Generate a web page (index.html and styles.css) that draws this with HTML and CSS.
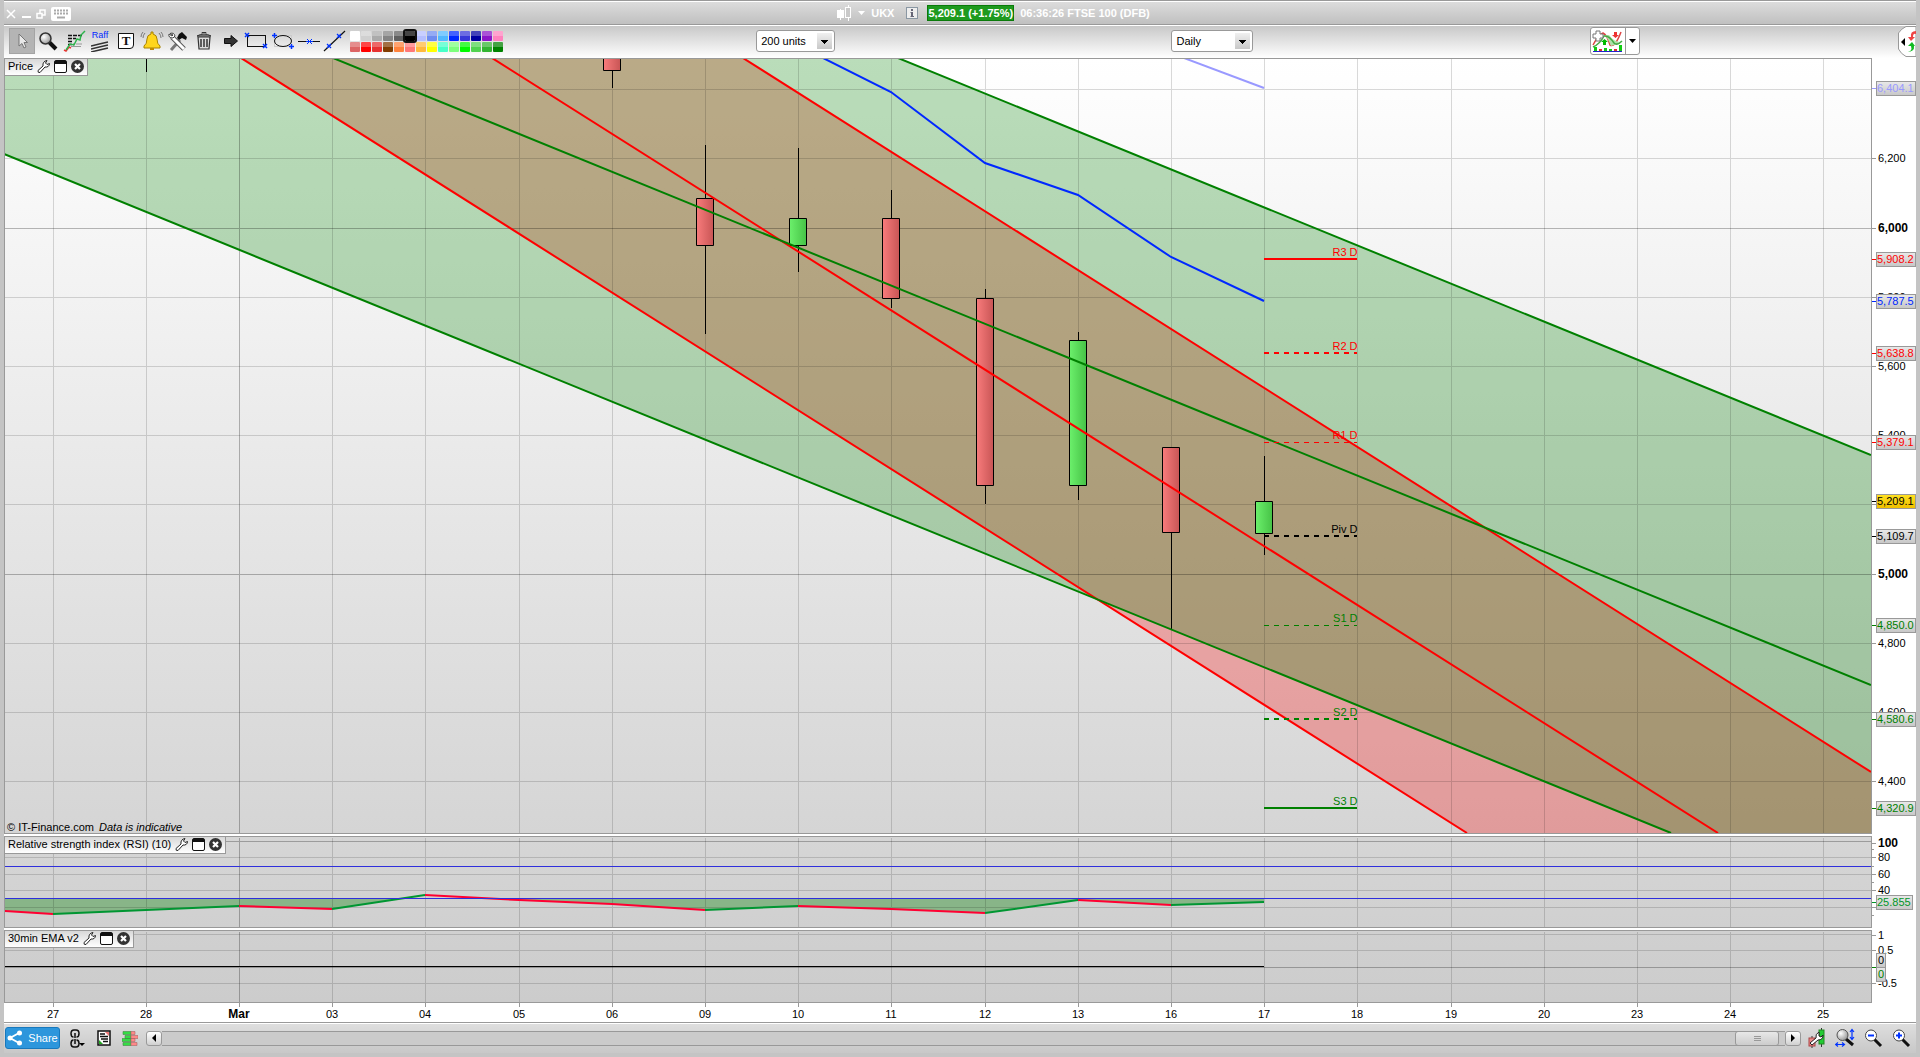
FILE: index.html
```html
<!DOCTYPE html>
<html lang="en">
<head>
<meta charset="utf-8">
<meta name="viewport" content="width=device-width, initial-scale=1">
<title>UKX - FTSE 100 (DFB)</title>
<link rel="stylesheet" href="styles.css">
</head>
<body>
<svg class="defs" aria-hidden="true">
  <defs>
    <linearGradient id="up"><stop offset="0" stop-color="#6cf06c"/><stop offset="1" stop-color="#46c246"/></linearGradient>
    <linearGradient id="down"><stop offset="0" stop-color="#f87c7c"/><stop offset="1" stop-color="#c85555"/></linearGradient>
    <radialGradient id="lens" cx=".35" cy=".35" r=".8"><stop offset="0" stop-color="#fff"/><stop offset="1" stop-color="#888"/></radialGradient>
    <symbol id="wrench" viewBox="0 0 13 13"><path d="M1 10.500 6 6C5.500 3 7 1 10 .500L8.500 3 10 4.500 12.500 3.500C12.500 6 10.500 7.500 8 7L3 12.500Q.5 13 1 10.500Z" fill="#fff" stroke="#222" stroke-width="1"/></symbol>
    <symbol id="panel" viewBox="0 0 13 13"><rect x=".5" y=".5" width="12" height="12" rx="1.500" fill="#fff" stroke="#111"/><path d="M1 1H12V4H1Z" fill="#111"/></symbol>
    <symbol id="close" viewBox="0 0 13 13"><circle cx="6.500" cy="6.500" r="6.500" fill="#333"/><path d="M4 4 9 9M9 4 4 9" stroke="#fff" stroke-width="2.200"/></symbol>
  </defs>
</svg>

<header class="titlebar">
  <div class="window-buttons">
    <button type="button" aria-label="Close"><svg width="10" height="10"><path d="M1 1 9 9M9 1 1 9" stroke="#fff" stroke-width="1.500"/></svg></button>
    <button type="button" aria-label="Minimise"><svg width="10" height="10"><path d="M1 8H10" stroke="#fff" stroke-width="2"/></svg></button>
    <button type="button" aria-label="Restore"><svg width="10" height="10"><path d="M4 4V1H9V6H6M1 4.500H6V9H1Z" fill="none" stroke="#fff" stroke-width="1.500"/></svg></button>
    <button type="button" aria-label="Keyboard"><svg width="20" height="14"><rect width="20" height="14" rx="2" fill="#fff"/><path d="M3 3.500H17M3 6.500H17" stroke="#aaa" stroke-width="2" stroke-dasharray="2 1"/><path d="M6 10.500H14" stroke="#aaa" stroke-width="2"/></svg></button>
  </div>
  <div class="instrument">
    <svg width="15" height="16"><path d="M3.500 4V15M11.500 0V16" stroke="#fff"/><rect y="5" width="7" height="8" fill="#fff"/><rect x="8.500" y="2.500" width="5" height="10" fill="#c9c9c9" stroke="#fff"/></svg>
    <svg class="caret" width="7" height="4"><path d="M0 0H7L3.500 4Z" fill="#fff"/></svg>
    <span>UKX</span>
    <svg class="info" width="12" height="12"><rect x=".5" y=".5" width="11" height="11" fill="#eee" stroke="#8a97a3"/><path d="M5 2H7V4H5ZM4.500 5H7V9H8V10H4.500V9H5V6H4.500Z" fill="#667"/></svg>
    <span class="quote">5,209.1 (+1.75%)</span>
    <span>06:36:26 FTSE 100 (DFB)</span>
  </div>
</header>

<div class="toolbar">
  <div class="tools">
    <button type="button" class="tool tool--active" aria-label="Pointer"><svg viewBox="0 0 26 26"><path d="M10 6V18L13 15.500 15 20 17 19 15 14.500H18.500Z" fill="#e8e8e8" stroke="#777"/></svg></button>
    <button type="button" class="tool" aria-label="Zoom"><svg viewBox="0 0 26 26"><path d="M14 14 21 21" stroke="#111" stroke-width="4"/><circle cx="10.500" cy="10.500" r="5.500" fill="url(#lens)" stroke="#333" stroke-width="1.500"/></svg></button>
    <button type="button" class="tool" aria-label="Analysis"><svg viewBox="0 0 26 26"><path d="M7 7.500H21M7 10.500H15M7 13.500H12M7 16.500H13" stroke="#111" stroke-width="1.500" stroke-dasharray="4 1"/><path d="M15 16H21M10 18.500H20" stroke="#999"/><path d="M3 22 5 23 8 19 10 20" fill="none" stroke="#e33" stroke-width="1.500"/><path d="M5 22 9 16 13 17 16 11 19 12 20 7 24 3" fill="none" stroke="#2cb44c" stroke-width="1.500"/></svg></button>
    <button type="button" class="tool tool--raff" aria-label="Raff channel"><span>Raff</span><svg viewBox="0 0 18 11"><path d="M0 5Q8 3 17 1M0 8Q8 6 17 4M0 11Q8 9 17 7" fill="none" stroke="#333" stroke-width="1.400"/></svg></button>
    <button type="button" class="tool tool--text" aria-label="Text"><span>T</span></button>
    <button type="button" class="tool" aria-label="Alert"><svg viewBox="0 0 26 26"><path d="M5 18Q8 16 8 11Q8 7 12 6V4H14V6Q18 7 18 11Q18 16 21 18V20H5Z" fill="#ffd51c" stroke="#a88200"/><path d="M11 20H15V22H11Z" fill="#c48b00"/><path d="M6 5Q4 7 4 10M4 4Q2 6 2 9M20 5Q22 7 22 10M22 4Q24 6 24 9" fill="none" stroke="#777"/></svg></button>
    <button type="button" class="tool" aria-label="Settings"><svg viewBox="0 0 26 26"><path d="M6 22 15 12" stroke="#777" stroke-width="3"/><path d="M7 9 19 21" stroke="#555" stroke-width="5"/><path d="M7 9 19 21" stroke="#fff" stroke-width="3"/><path d="M5 5.500Q9 4 10 8L8 10Q3 10 4 6L7 8 8 7Z" fill="#fff" stroke="#444"/><path d="M14 6 17 4 22 9 21 12 17 10 14 12 12 10Z" fill="#111"/></svg></button>
    <button type="button" class="tool" aria-label="Delete"><svg viewBox="0 0 26 26"><path d="M7 9H19L18 21H8Z" fill="#ddd" stroke="#333" stroke-width="1.200"/><path d="M10 11V19M13 11V19M16 11V19" stroke="#333" stroke-width="1.500"/><path d="M6 8Q13 4 20 8Z" fill="#aaa" stroke="#333"/><path d="M11 5.500V4.500H15V5.500" fill="none" stroke="#333"/></svg></button>
    <button type="button" class="tool" aria-label="Arrow"><svg viewBox="0 0 26 26"><path d="M7.500 10.500H14V7.500L20.500 13 14 18.500V15.500H7.500Z" fill="#333" stroke="#111"/></svg></button>
    <button type="button" class="tool" aria-label="Rectangle"><svg viewBox="0 0 26 26"><rect x="4.500" y="7.500" width="18" height="11" fill="none" stroke="#111"/><path d="M2 5 6 9M6 5 2 9M20 16 24 20M24 16 20 20" stroke="#03f" stroke-width="1.500"/></svg></button>
    <button type="button" class="tool" aria-label="Ellipse"><svg viewBox="0 0 26 26"><rect x="5.500" y="7.500" width="17" height="11" fill="none" stroke="#ccc"/><ellipse cx="14" cy="13" rx="8.500" ry="5.500" fill="none" stroke="#111"/><path d="M3 7.500H8M5.500 5V10M20 18.500H25M22.500 16V21" stroke="#03f" stroke-width="1.500"/></svg></button>
    <button type="button" class="tool" aria-label="Horizontal line"><svg viewBox="0 0 26 26"><path d="M3 13.500H25" stroke="#111"/><path d="M12 11 17 16M17 11 12 16M11 13.500H18" stroke="#03f"/></svg></button>
    <button type="button" class="tool" aria-label="Line"><svg viewBox="0 0 26 26"><path d="M3 23 24 3" stroke="#111" stroke-width="1.200"/><path d="M6 16 10 20M10 16 6 20M16 6 20 10M20 6 16 10" stroke="#03f" stroke-width="1.300"/></svg></button>
  </div>
  <div class="palette">
    <button type="button" aria-label="White" style="--c:#fff"></button><button type="button" aria-label="Grey 1" style="--c:#d0d0d0"></button><button type="button" aria-label="Grey 2" style="--c:#aaa"></button><button type="button" aria-label="Grey 3" style="--c:#848484"></button><button type="button" aria-label="Grey 4" style="--c:#606060"></button><button type="button" aria-label="Black" class="is-selected" style="--c:#000"></button><button type="button" aria-label="Lavender" style="--c:#b4beff"></button><button type="button" aria-label="Cornflower" style="--c:#6e8cf0"></button><button type="button" aria-label="Sky" style="--c:#50b8ff"></button><button type="button" aria-label="Blue" style="--c:#0028ff"></button><button type="button" aria-label="Royal blue" style="--c:#3838d8"></button><button type="button" aria-label="Navy" style="--c:#0000a0"></button><button type="button" aria-label="Purple" style="--c:#8c14c8"></button><button type="button" aria-label="Pink" style="--c:#ff82be"></button>
    <button type="button" aria-label="Rose" style="--c:#dc6464"></button><button type="button" aria-label="Red" style="--c:#f00"></button><button type="button" aria-label="Crimson" style="--c:#e63232"></button><button type="button" aria-label="Brown" style="--c:#823c00"></button><button type="button" aria-label="Orange" style="--c:#ff823c"></button><button type="button" aria-label="Salmon" style="--c:#ff7878"></button><button type="button" aria-label="Amber" style="--c:#ffb93c"></button><button type="button" aria-label="Yellow" style="--c:#ff0"></button><button type="button" aria-label="Aqua" style="--c:#46ffc8"></button><button type="button" aria-label="Mint" style="--c:#7dff7d"></button><button type="button" aria-label="Lime" style="--c:#00fa00"></button><button type="button" aria-label="Green 1" style="--c:#50d250"></button><button type="button" aria-label="Green 2" style="--c:#32b432"></button><button type="button" aria-label="Green 3" style="--c:#008200"></button>
  </div>
  <select class="combo combo--units" aria-label="Number of units"><option>200 units</option></select>
  <select class="combo combo--period" aria-label="Timeframe"><option>Daily</option></select>
  <div class="indicators">
    <button type="button" aria-label="Add indicator"><svg width="32" height="22"><path d="M1 15Q7 4 11 3Q15 5 18 15Q23 18 29 2" fill="none" stroke="#d44" stroke-width="1.500"/><path d="M12 5Q16 8 19 16Q23 15 28 12Q22 12 17 5Z" fill="#aee0a8"/><path d="M1 17Q8 14 12 6Q17 5 22 13Q25 16 30 11" fill="none" stroke="#4a4" stroke-width="1.500"/><path d="M4 1H8V4H11V8H8V11H4V8H1V4H4Z" fill="#fff" stroke="#777"/><path d="M22 2H25V5H27L23.500 8 20 5H22Z" fill="#e33"/><path d="M11 15V12H9L12.500 9 16 12H14V15Z" fill="#0b0"/><path d="M2 21V17H5V21M12 21V18H15V21M17 21V19H20V21M27 21V15H30V21" fill="#1c1"/><path d="M7 21V19H10V21M22 21V19H25V21" fill="#d33"/><path d="M1 21.500H30" stroke="#22c"/></svg></button>
    <button type="button" class="drop" aria-label="Indicator list"><svg width="7" height="4"><path d="M0 0H7L3.500 4Z"/></svg></button>
  </div>
  <button type="button" class="flyout" aria-label="Trading panel"><svg width="18" height="31" viewBox="0 0 18 31"><path d="M18 .5H8Q3 3 .5 7V23Q3 28 8 30.500H18Z" fill="#fff" stroke="#999"/><path d="M7 12V20L3 16Z"/><path d="M18 5Q12 5 13 11H10L13 15 17 11H15Q15 7 18 8Z" fill="#e44"/><path d="M8 26Q15 26 13 20H10L14 16 17 20H16Q17 26 8 26Z" fill="#1b2"/></svg></button>
</div>

<main class="charts">
  <section class="row row--price">
    <div class="plot">
      <svg class="canvas" viewBox="5 59 1866 774" preserveAspectRatio="none">
        <g class="bands">
          <path class="band-red" d="M241 58H743L1871 772V833H1467Z"/>
          <path class="band-green" d="M4 58H898L1871 455V833H1671L4 154Z"/>
        </g>
        <g class="grid" transform="translate(.5 .5)">
          <path d="M53 58V833M146 58V833M332 58V833M425 58V833M519 58V833M612 58V833M705 58V833M798 58V833M891 58V833M985 58V833M1078 58V833M1171 58V833M1264 58V833M1357 58V833M1451 58V833M1544 58V833M1637 58V833M1730 58V833M1823 58V833M4 89H1871M4 158H1871M4 297H1871M4 366H1871M4 435H1871M4 504H1871M4 643H1871M4 712H1871M4 781H1871"/>
          <path class="major" d="M239 58V833M4 228H1871M4 574H1871"/>
        </g>
        <g class="candles">
          <path class="wick" d="M146.500 59V72M612.500 70V88M705.500 145V334M798.500 148V272M891.500 190V308M985.500 289V504M1078.500 332V500M1171.500 447V629M1264.500 456V555"/>
          <g fill="url(#down)">
            <rect x="603.500" y="50.500" width="17" height="20"/>
            <rect x="696.500" y="198.500" width="17" height="47"/>
            <rect x="882.500" y="218.500" width="17" height="80"/>
            <rect x="976.500" y="298.500" width="17" height="187"/>
            <rect x="1162.500" y="447.500" width="17" height="85"/>
          </g>
          <g fill="url(#up)">
            <rect x="789.500" y="218.500" width="17" height="27"/>
            <rect x="1069.500" y="340.500" width="17" height="145"/>
            <rect x="1255.500" y="501.500" width="17" height="32"/>
          </g>
        </g>
        <g class="trends">
          <path class="red" d="M241 58 1467 833M492 58 1718 833M743 58 1871 772"/>
          <path class="green" d="M4 154 1671 833M333 58 1871 685M898 58 1871 455"/>
          <path class="blue" d="M823 58 891 92 985 163 1078 195 1171 257 1264 301"/>
          <path class="violet" d="M1184 58 1264 88"/>
        </g>
        <g class="pivots">
          <path class="red thick" d="M1264 259H1357"/>
          <path class="red thick dash" d="M1264 353H1357"/>
          <path class="red dash" d="M1264 442.500H1357"/>
          <path class="black thick dash" d="M1264 536H1357"/>
          <path class="green dash" d="M1264 625.500H1357"/>
          <path class="green thick dash" d="M1264 719H1357"/>
          <path class="green thick" d="M1264 808H1357"/>
        </g>
      </svg>
      <span class="pivot red" style="--x:1357;--y:251">R3 D</span>
      <span class="pivot red" style="--x:1357;--y:346">R2 D</span>
      <span class="pivot red" style="--x:1357;--y:435">R1 D</span>
      <span class="pivot" style="--x:1357;--y:529">Piv D</span>
      <span class="pivot green" style="--x:1357;--y:618">S1 D</span>
      <span class="pivot green" style="--x:1357;--y:713">S2 D</span>
      <span class="pivot green" style="--x:1357;--y:802">S3 D</span>
      <div class="tab"><span>Price</span><button type="button" aria-label="Price settings"><svg><use href="#wrench"/></svg></button><button type="button" aria-label="Price window"><svg><use href="#panel"/></svg></button><button type="button" aria-label="Close Price"><svg><use href="#close"/></svg></button></div>
      <p class="credit">© IT-Finance.com <i>Data is indicative</i></p>
    </div>
    <div class="axis">
      <span class="tick" style="--y:158">6,200</span>
      <span class="tick major" style="--y:228">6,000</span>
      <span class="tick" style="--y:297">5,800</span>
      <span class="tick" style="--y:366">5,600</span>
      <span class="tick" style="--y:435">5,400</span>
      <span class="tick" style="--y:504"></span>
      <span class="tick major" style="--y:574">5,000</span>
      <span class="tick" style="--y:643">4,800</span>
      <span class="tick" style="--y:712">4,600</span>
      <span class="tick" style="--y:781">4,400</span>
      <span class="tag violet" style="--y:88">6,404.1</span>
      <span class="tag red" style="--y:259">5,908.2</span>
      <span class="tag blue" style="--y:301">5,787.5</span>
      <span class="tag red" style="--y:353">5,638.8</span>
      <span class="tag red" style="--y:442">5,379.1</span>
      <span class="tag last" style="--y:501">5,209.1</span>
      <span class="tag" style="--y:536">5,109.7</span>
      <span class="tag green" style="--y:625">4,850.0</span>
      <span class="tag green" style="--y:719">4,580.6</span>
      <span class="tag green" style="--y:808">4,320.9</span>
    </div>
  </section>

  <section class="row row--rsi">
    <div class="plot">
      <svg class="canvas" viewBox="5 837 1866 90" preserveAspectRatio="none">
        <path class="rsi-zone" d="M4 898V911L53 914 146 910 239 906 332 909 402 898ZM480 898 519 900 612 904 705 910 798 906 891 909 985 913 1078 900 1171 905 1264 902V898Z"/>
        <g class="grid" transform="translate(.5 .5)">
          <path d="M53 837V927M146 837V927M332 837V927M425 837V927M519 837V927M612 837V927M705 837V927M798 837V927M891 837V927M985 837V927M1078 837V927M1171 837V927M1264 837V927M1357 837V927M1451 837V927M1544 837V927M1637 837V927M1730 837V927M1823 837V927M4 857H1871M4 874H1871M4 890H1871M4 907H1871"/>
          <path class="major" d="M239 837V927M4 841H1871"/>
        </g>
        <path class="rsi-down" d="M4 911 53 914M239 906 332 909M425 895 519 900 612 904 705 910M798 906 891 909 985 913M1078 900 1171 905"/>
        <path class="rsi-up" d="M53 914 146 910 239 906M332 909 425 895M705 910 798 906M985 913 1078 900M1171 905 1264 902"/>
        <path class="level" d="M4 866.500H1871M4 898.500H1871"/>
      </svg>
      <div class="tab"><span>Relative strength index (RSI) (10)</span><button type="button" aria-label="RSI settings"><svg><use href="#wrench"/></svg></button><button type="button" aria-label="RSI window"><svg><use href="#panel"/></svg></button><button type="button" aria-label="Close RSI"><svg><use href="#close"/></svg></button></div>
    </div>
    <div class="axis">
      <span class="tick major" style="--y:843">100</span>
      <span class="tick minor" style="--y:849"></span>
      <span class="tick" style="--y:857">80</span>
      <span class="tick minor" style="--y:866"></span>
      <span class="tick" style="--y:874">60</span>
      <span class="tick minor" style="--y:882"></span>
      <span class="tick" style="--y:890">40</span>
      <span class="tick" style="--y:907"></span>
      <span class="tick minor" style="--y:915"></span>
      <span class="tag up" style="--y:902">25.855</span>
    </div>
  </section>

  <section class="row row--ema">
    <div class="plot">
      <svg class="canvas" viewBox="5 931 1866 71" preserveAspectRatio="none">
        <g class="grid" transform="translate(.5 .5)">
          <path d="M53 931V1002M146 931V1002M332 931V1002M425 931V1002M519 931V1002M612 931V1002M705 931V1002M798 931V1002M891 931V1002M985 931V1002M1078 931V1002M1171 931V1002M1264 931V1002M1357 931V1002M1451 931V1002M1544 931V1002M1637 931V1002M1730 931V1002M1823 931V1002M4 934H1871M4 950H1871M4 983H1871"/>
          <path class="major" d="M239 931V1002M4 967H1871"/>
        </g>
        <path class="ema" d="M4 966.500H1264"/>
      </svg>
      <div class="tab"><span>30min EMA v2</span><button type="button" aria-label="EMA settings"><svg><use href="#wrench"/></svg></button><button type="button" aria-label="EMA window"><svg><use href="#panel"/></svg></button><button type="button" aria-label="Close EMA"><svg><use href="#close"/></svg></button></div>
    </div>
    <div class="axis">
      <span class="tick" style="--y:935">1</span>
      <span class="tick" style="--y:950">0.5</span>
      <span class="tick" style="--y:983">-0.5</span>
      <span class="tick zero" style="--y:967"></span>
      <span class="tag bare" style="--y:960">0</span>
      <span class="tag bare green" style="--y:974">0</span>
    </div>
  </section>

  <div class="dates">
    <div class="dates-scale">
      <span style="--x:53">27</span><span style="--x:146">28</span><span class="major" style="--x:239">Mar</span><span style="--x:332">03</span><span style="--x:425">04</span><span style="--x:519">05</span><span style="--x:612">06</span><span style="--x:705">09</span><span style="--x:798">10</span><span style="--x:891">11</span><span style="--x:985">12</span><span style="--x:1078">13</span><span style="--x:1171">16</span><span style="--x:1264">17</span><span style="--x:1357">18</span><span style="--x:1451">19</span><span style="--x:1544">20</span><span style="--x:1637">23</span><span style="--x:1730">24</span><span style="--x:1823">25</span>
    </div>
  </div>
</main>

<footer class="bottombar">
  <button type="button" class="share"><svg width="16" height="16"><path d="M3 8 12 3M3 8 12 13" stroke="#fff" stroke-width="2"/><circle cx="3" cy="8" r="2.500" fill="#fff"/><circle cx="12.500" cy="3" r="2.500" fill="#fff"/><circle cx="12.500" cy="13" r="2.500" fill="#fff"/></svg>Share</button>
  <div class="links">
    <button type="button" aria-label="Link windows"><svg width="16" height="19"><path d="M3.500 8Q1 8 1 4.500T4 1H6Q9 1 9 4.500T6.500 8M5 4V9M3.500 11Q1 11 1 14.500T4 18H6Q9 18 9 14.500T6.500 11M5 10V15" fill="none" stroke="#111" stroke-width="1.500"/><path d="M9 14H15L12 17Z"/></svg></button>
    <button type="button" aria-label="Report"><svg width="14" height="16"><rect x="1" y="1" width="12" height="14" fill="#fff" stroke="#111" stroke-width="1.500"/><path d="M3 4H8M3 6.500H11M4 9H11M6 11.500H11" stroke="#111" stroke-width="1.500"/><path d="M8 2H12V6Z" fill="#e77"/><path d="M2 10V14H6Z" fill="#2a2"/></svg></button>
    <button type="button" aria-label="Market depth"><svg width="16" height="16"><path d="M1 1.500H9V4.500H1ZM3 5.500H9V8.500H3ZM0 8.500H9V11.500H0ZM1 12.500H9V15.500H1Z" fill="#3d4" stroke="#484" stroke-width=".6"/><path d="M9 1.500H13V4.500H9ZM9 5.500H16V8.500H9ZM9 8.500H13V11.500H9ZM9 12.500H15V15.500H9Z" fill="#f88" stroke="#a66" stroke-width=".6"/></svg></button>
  </div>
  <div class="scrollbar">
    <button type="button" aria-label="Scroll left"><svg width="4" height="8"><path d="M4 0V8L0 4Z"/></svg></button>
    <div class="track"><div class="thumb"></div></div>
    <button type="button" aria-label="Scroll right"><svg width="4" height="8"><path d="M0 0V8L4 4Z"/></svg></button>
  </div>
  <div class="zoom">
    <button type="button" aria-label="Chart settings"><svg width="20" height="20"><path d="M5 8V20M14.500 0V19" stroke="#333"/><rect x="2" y="10" width="6" height="8" fill="#e88" stroke="#a44"/><rect x="12" y="2" width="5" height="14" fill="#2c3" stroke="#282"/><path d="M3 15 9 10Q8 6 12 4V8L14 9 16 7Q16 12 11 12L5 17Z" fill="#fff" stroke="#222"/></svg></button>
    <button type="button" aria-label="Fit"><svg width="20" height="20"><path d="M11 11 18 17" stroke="#111" stroke-width="3"/><circle cx="7.500" cy="7" r="5.500" fill="url(#lens)" stroke="#555"/><path d="M17 2V11M15 4 17 1.500 19 4M15 9 17 11.500 19 9M1 16.500H9M3 14.500 .5 16.500 3 18.500M7 14.500 9.500 16.500 7 18.500" fill="none" stroke="#03f" stroke-width="1.200"/></svg></button>
    <button type="button" aria-label="Zoom out"><svg width="20" height="20"><path d="M11 11 18 18" stroke="#111" stroke-width="3"/><circle cx="8" cy="7.500" r="5.500" fill="#fff" stroke="#444"/><path d="M5 7.500H11" stroke="#03f" stroke-width="2"/></svg></button>
    <button type="button" aria-label="Zoom in"><svg width="20" height="20"><path d="M11 11 18 18" stroke="#111" stroke-width="3"/><circle cx="8" cy="7.500" r="5.500" fill="#fff" stroke="#444"/><path d="M5 7.500H11M8 4.500V10.500" stroke="#03f" stroke-width="2"/></svg></button>
  </div>
</footer>
</body>
</html>
```
FILE: styles.css
```css
* {
  box-sizing: border-box;
}

body {
  margin: 0;
  min-height: 100vh;
  display: flex;
  flex-direction: column;
  border: solid #c4c4c4;
  border-width: 0 4px 4px;
  background: #fff;
  font: 11px/14px "Liberation Sans", Arial, sans-serif;
  color: #000;
}

button {
  display: flex;
  align-items: center;
  justify-content: center;
  padding: 0;
  border: 0;
  background: none;
  color: inherit;
  font: inherit;
}

svg {
  display: block;
  flex: none;
}

.defs {
  position: absolute;
  width: 0;
  height: 0;
}

.red { color: #f00; }
.green { color: #008000; }
.blue { color: #0028ff; }
.violet { color: #9999ff; }
.up { color: #009628; }

/* Title bar */

.titlebar {
  display: flex;
  align-items: center;
  height: 25px;
  border-top: 1px solid #999;
  border-bottom: 1px solid #999;
  background: linear-gradient(#fff 1px, #dcdcdc 1px, #c0c0c0);
  color: #fff;
  font-weight: bold;
}

.window-buttons {
  display: flex;
  align-items: center;
  gap: 5px;
  padding: 2px 0 0 2px;
}

.instrument {
  flex: 1;
  display: flex;
  align-items: center;
  justify-content: center;
  gap: 6px;
}

.info {
  margin-left: 6px;
}

.quote {
  margin-left: 3px;
  border: 1px solid #0a7a0a;
  background: #1e9a1e;
}

/* Toolbar */

.toolbar {
  display: grid;
  grid-template-columns: auto auto 253fr auto 336fr auto 336fr auto 258fr auto;
  align-items: center;
  height: 33px;
  padding-bottom: 1px;
  background: linear-gradient(#fff 1px, #c8c8c8 1px, #fff);
}

.tools {
  display: flex;
  padding-left: 5px;
}

.tool {
  width: 26px;
  height: 26px;
}

.tool svg {
  width: 26px;
  height: 26px;
}

.tool--active {
  border: 1px solid #a4a4a4;
  background: #b4b4b4;
}

.tool--raff {
  flex-direction: column;
  gap: 1px;
  color: #0028ff;
  font-size: 9px;
  line-height: 9px;
}

.tool--raff svg {
  width: 18px;
  height: 11px;
}

.tool--text span {
  width: 16px;
  height: 16px;
  border: 1px solid #111;
  border-bottom-right-radius: 4px;
  background: #fff;
  color: #111;
  font: bold 13px/14px "Liberation Serif", serif;
}

.palette {
  display: grid;
  grid-template-columns: repeat(14, 10px);
  gap: 1px;
  margin-left: 3px;
}

.palette button {
  height: 10px;
  border-radius: 1px;
  background: linear-gradient(#fff4 50%, #fff0 50%) var(--c);
}

.palette .is-selected {
  z-index: 1;
  outline: 2px solid #111;
}

.combo {
  height: 22px;
  border: 1px solid #999;
  border-radius: 3px;
  padding: 0 20px 0 4px;
  appearance: none;
  background:
    linear-gradient(#000, #000) right 9px top 12px / 1px 1px no-repeat,
    linear-gradient(#000, #000) right 8px top 11px / 3px 1px no-repeat,
    linear-gradient(#000, #000) right 7px top 10px / 5px 1px no-repeat,
    linear-gradient(#000, #000) right 6px top 9px / 7px 1px no-repeat,
    linear-gradient(#f0f0f0, #c8c8c8) right 2px center / 15px 16px no-repeat,
    #fff;
  color: #000;
  font: inherit;
}

.combo--units {
  grid-column: 4;
  width: 79px;
}

.combo--period {
  grid-column: 6;
  width: 82px;
}

.indicators {
  grid-column: 8;
  display: flex;
  width: 50px;
  height: 28px;
  border: 1px solid #999;
  border-radius: 3px;
  background: #fff;
}

.indicators button {
  flex: 1;
}

.indicators .drop {
  flex: none;
  width: 14px;
  border-left: 1px solid #999;
}

.flyout {
  grid-column: 10;
}

/* Chart panels */

.charts {
  flex: 1;
  display: flex;
  flex-direction: column;
  gap: 2px;
}

.row {
  display: flex;
}

.row--price {
  --top: 58;
  --span: 776;
  --paper: linear-gradient(#fff, #d5d5d5);
  flex: 1;
  min-height: 320px;
}

.row--rsi {
  --top: 836;
  --span: 92;
  --paper: linear-gradient(#d6d6d6, #d0d0d0);
  height: 92px;
}

.row--ema {
  --top: 930;
  --span: 73;
  --paper: linear-gradient(#d0d0d0, #cccccc);
  height: 73px;
}

.plot {
  position: relative;
  flex: 1;
  border: 1px solid #999;
  background: var(--paper);
}

.canvas {
  position: absolute;
  inset: 0;
  width: 100%;
  height: 100%;
  fill: none;
}

.canvas path,
.canvas rect {
  vector-effect: non-scaling-stroke;
}

.grid {
  stroke: rgba(0, 0, 0, 0.15);
  shape-rendering: crispEdges;
}

.grid .major {
  stroke: rgba(0, 0, 0, 0.27);
}

.candles {
  stroke: #000;
}

.band-red { fill: rgba(255, 0, 0, 0.27); }
.band-green { fill: rgba(0, 128, 0, 0.27); }

.trends path {
  stroke: currentColor;
  stroke-width: 2;
}

.pivots path {
  stroke: currentColor;
}

.pivots .thick {
  stroke-width: 2;
}

.pivots .dash {
  stroke-dasharray: 5 5;
}

.level {
  stroke: #2f2fdc;
}

.rsi-zone { fill: rgba(0, 128, 0, 0.35); }

.rsi-down {
  stroke: #ff0032;
  stroke-width: 2;
}

.rsi-up {
  stroke: #009632;
  stroke-width: 2;
}

.ema {
  stroke: #000;
}

.pivot {
  position: absolute;
  top: calc(100% * (var(--y) - var(--top)) / var(--span));
  right: calc(100% * (1871 - var(--x)) / 1868);
  margin-top: -7px;
  white-space: nowrap;
}

.tab {
  position: absolute;
  top: 0;
  left: 0;
  display: flex;
  align-items: center;
  gap: 4px;
  height: 17px;
  padding: 0 3px 2px;
  border: solid #999;
  border-width: 0 1px 1px 0;
  background: linear-gradient(#d8d8d8, #fff);
}

.tab svg {
  width: 13px;
  height: 13px;
}

.credit {
  position: absolute;
  bottom: 0;
  left: 2px;
  margin: 0;
  line-height: 12px;
}

.credit i {
  margin-left: 2px;
}

/* Value axes */

.axis {
  position: relative;
  width: 44px;
}

.tick,
.tag {
  position: absolute;
  top: calc(100% * (var(--y) - var(--top)) / var(--span));
  height: 14px;
  margin-top: -7px;
}

.tick {
  left: 0;
  padding-left: 6px;
}

.tick::before,
.tag::before {
  content: "";
  position: absolute;
  top: 7px;
  left: 0;
  width: 4px;
  height: 1px;
  background: #999;
}

.major {
  font-weight: bold;
}

.axis .major {
  font-size: 12px;
}

.minor::before {
  width: 2px;
}

.zero::before {
  background: #008000;
}

.tag {
  left: 4px;
  height: 15px;
  padding-right: 1px;
  border: 1px solid #999;
  background: linear-gradient(#e8e8e8, #c8c8c8);
  line-height: 13px;
}

.tag::before {
  top: 6px;
  left: -5px;
  background: currentColor;
}

.tag.last {
  background: linear-gradient(#ffe020, #f0c000);
}

.tag.bare {
  padding-left: 1px;
}

.tag.bare::before {
  content: none;
}

/* Date axis */

.dates {
  height: 20px;
  margin-top: -2px;
  padding-right: 44px;
  border-bottom: 1px solid #999;
}

.dates-scale {
  position: relative;
  height: 19px;
}

.dates-scale span {
  position: absolute;
  top: 4px;
  left: calc(100% * (var(--x) - 4) / 1868);
  width: 40px;
  margin-left: -20px;
  text-align: center;
}

.dates-scale span::before {
  content: "";
  position: absolute;
  top: -4px;
  left: 20px;
  width: 1px;
  height: 4px;
  background: #999;
}

.dates-scale .major {
  font-size: 12px;
}

/* Bottom bar */

.bottombar {
  display: flex;
  align-items: center;
  height: 30px;
  padding-left: 1px;
  background: linear-gradient(#fff 1px, #dedede 1px, #c8c8c8);
}

.share {
  gap: 5px;
  width: 55px;
  height: 22px;
  border: 1px solid #1878bc;
  border-radius: 3px;
  background: #2d96dc;
  color: #fff;
}

.links {
  display: flex;
  align-items: center;
  gap: 11px;
  margin-left: 10px;
}

.scrollbar {
  flex: 1;
  display: flex;
  margin: 0 6px 0 8px;
}

.scrollbar button {
  width: 16px;
  height: 15px;
  border: 1px solid #999;
  border-radius: 3px;
  background: linear-gradient(#fff, #d0d0d0);
}

.track {
  flex: 1;
  display: flex;
  justify-content: flex-end;
  border: solid #999;
  border-width: 1px 0;
  padding-right: 6px;
  background: #cbcbcb;
}

.thumb {
  width: 44px;
  margin: -1px 0;
  border: 1px solid #999;
  border-radius: 3px;
  background:
    repeating-linear-gradient(#999 0 1px, #fff0 1px 2px) center / 7px 5px no-repeat,
    linear-gradient(#e8e8e8, #ccc);
}

.zoom {
  display: flex;
  gap: 8px;
  padding-right: 5px;
}
```
